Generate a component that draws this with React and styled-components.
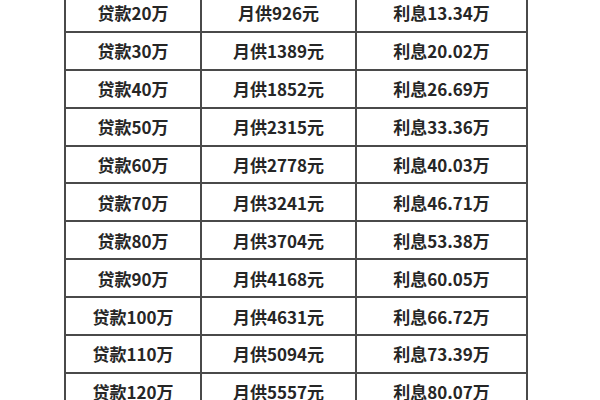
import React from "react";
import styled, { createGlobalStyle } from "styled-components";

const Global = createGlobalStyle`
  html, body { margin: 0; padding: 0; background: #ffffff; overflow: hidden; }
  body { width: 600px; height: 400px; font-family: "Noto Sans CJK SC", "Noto Sans", sans-serif; }
`;

const Page = styled.div`
  width: 600px;
  height: 400px;
  overflow: hidden;
  background: #fff;
  display: flex;
  justify-content: flex-start;
  padding-left: 64px;
  box-sizing: border-box;
`;

const Table = styled.table`
  border-collapse: collapse;
  margin-top: -7px;
  table-layout: fixed;
  width: 464px;
  height: max-content;
`;

const Row = styled.tr`
  height: 37.9px;
`;

const Cell = styled.td`
  border: 2px solid #4a4a4a;
  padding: 0;
  text-align: center;
  vertical-align: middle;
  font-weight: 700;
  font-size: 17px;
  color: #262626;
  line-height: 1;
  width: ${(p) => p.$w}px;
  box-sizing: border-box;
`;

const rows = [
  ["贷款20万", "月供926元", "利息13.34万"],
  ["贷款30万", "月供1389元", "利息20.02万"],
  ["贷款40万", "月供1852元", "利息26.69万"],
  ["贷款50万", "月供2315元", "利息33.36万"],
  ["贷款60万", "月供2778元", "利息40.03万"],
  ["贷款70万", "月供3241元", "利息46.71万"],
  ["贷款80万", "月供3704元", "利息53.38万"],
  ["贷款90万", "月供4168元", "利息60.05万"],
  ["贷款100万", "月供4631元", "利息66.72万"],
  ["贷款110万", "月供5094元", "利息73.39万"],
  ["贷款120万", "月供5557元", "利息80.07万"],
];

const widths = [136, 155, 171];

export default function App() {
  return (
    <>
      <Global />
      <Page>
        <Table>
          <tbody>
            {rows.map((r, i) => (
              <Row key={i}>
                {r.map((c, j) => (
                  <Cell key={j} $w={widths[j]}>
                    {c}
                  </Cell>
                ))}
              </Row>
            ))}
          </tbody>
        </Table>
      </Page>
    </>
  );
}
